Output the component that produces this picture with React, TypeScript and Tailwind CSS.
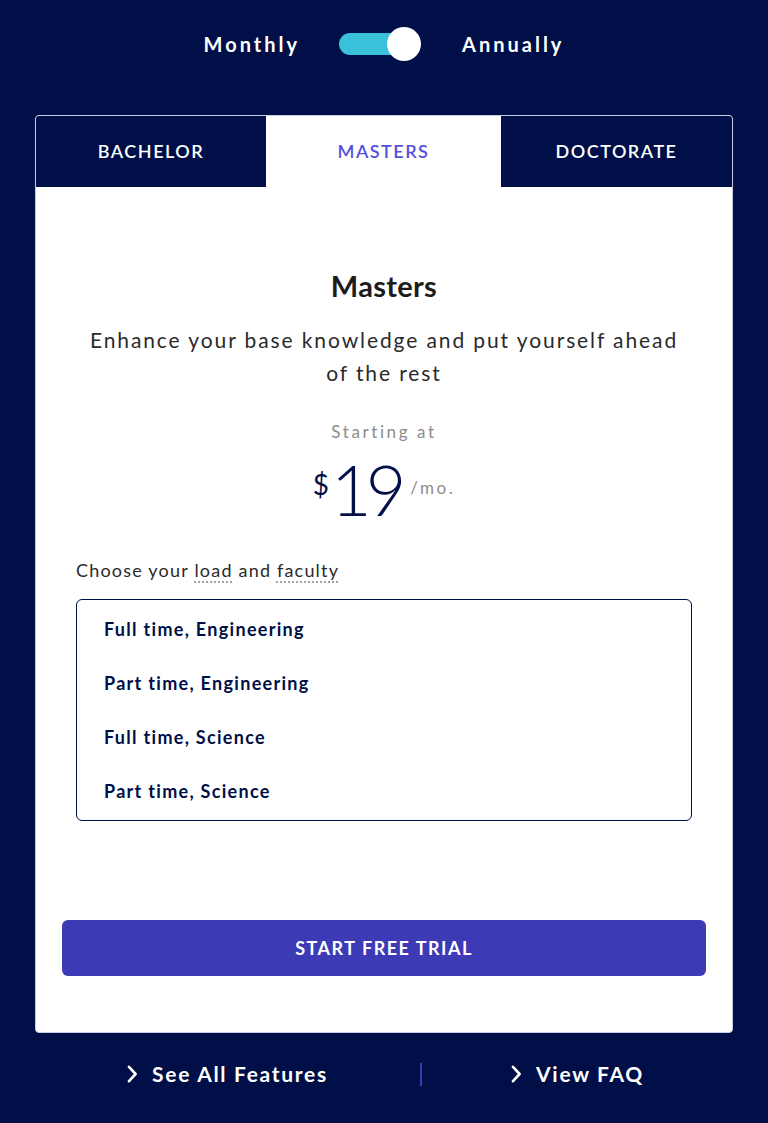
import { useState } from 'react'

const options = [
  'Full time, Engineering',
  'Part time, Engineering',
  'Full time, Science',
  'Part time, Science',
]

function Chevron() {
  return (
    <svg width="11" height="18" viewBox="0 0 11 18" fill="none" className="shrink-0">
      <path d="M2 1.8 L8.6 9 L2 16.2" stroke="white" strokeWidth="2.6" strokeLinecap="round" strokeLinejoin="round" />
    </svg>
  )
}

export default function App() {
  const [annual, setAnnual] = useState(true)
  const [tab, setTab] = useState('MASTERS')

  return (
    <div className="min-h-screen bg-[#000f47] font-['Lato','Liberation_Sans',sans-serif] flex flex-col items-center pt-[27px]">
      {/* Billing toggle */}
      <div className="flex items-center h-[34px]">
        <span className="text-white text-[20px] font-bold tracking-[3px] mr-[39px]">Monthly</span>
        <button
          onClick={() => setAnnual(!annual)}
          className="relative w-[82px] h-[34px] flex items-center"
        >
          <span className="absolute left-0 w-[66px] h-[22px] rounded-full bg-[#38c1d9]" />
          <span className="absolute right-0 w-[34px] h-[34px] rounded-full bg-white" />
        </button>
        <span className="text-white text-[20px] font-bold tracking-[3px] ml-[41px]">Annually</span>
      </div>

      {/* Card */}
      <div className="mt-[54px] w-[698px] bg-white rounded-[4px] border border-[#c8cbe0] overflow-hidden flex flex-col">
        <div className="flex h-[71px]">
          {['BACHELOR', 'MASTERS', 'DOCTORATE'].map((t, i) => (
            <button
              key={t}
              onClick={() => setTab(t)}
              className={`flex items-center justify-center text-[18px] font-semibold tracking-[1.5px] ${
                i === 0 ? 'w-[230px]' : i === 1 ? 'w-[235px]' : 'flex-1'
              } ${tab === t ? 'bg-white text-[#5450df]' : 'bg-[#000f47] text-white'}`}
            >
              {t}
            </button>
          ))}
        </div>

        <div className="flex flex-col px-[26px] pt-[83px] pb-[56px]">
          <h2 className="text-center text-[29px] leading-[32px] font-bold text-[#1c1c1c] tracking-[0.3px]">Masters</h2>
          <p className="mt-[21px] text-center text-[21px] leading-[33px] tracking-[1.9px] text-[#2a2a2a] px-[18px]">
            Enhance your base knowledge and put yourself ahead of the rest
          </p>
          <p className="mt-[31px] text-center text-[17px] leading-[24px] tracking-[2.6px] text-[#8c8c8c]">Starting at</p>

          <div className="mt-[12px] flex justify-center items-start h-[66px]">
            <span className="text-[28px] leading-none text-[#000f47] mt-[14px] mr-[2px]">$</span>
            <span className="text-[70px] leading-[66px] font-light text-[#000f47] tracking-[-6px]">19</span>
            <span className="text-[17px] text-[#8c8c8c] tracking-[2.5px] mt-[19px] ml-[10px]">/mo.</span>
          </div>

          <p className="mt-[36px] mx-[14px] text-[18px] leading-[24px] tracking-[1.2px] text-[#2a2a2a]">
            Choose your{' '}
            <span className="underline decoration-dotted decoration-[#999] underline-offset-[5px]">load</span> and{' '}
            <span className="underline decoration-dotted decoration-[#999] underline-offset-[5px]">faculty</span>
          </p>

          <div className="mt-[17px] mx-[14px] border border-[#000f47] rounded-[6px] py-[2px]">
            {options.map((o) => (
              <div key={o} className="h-[54px] flex items-center px-[27px] text-[18px] font-bold text-[#000f47] tracking-[1.3px]">
                {o}
              </div>
            ))}
          </div>

          <button className="mt-[99px] h-[56px] rounded-[6px] bg-[#3c3bb5] text-white text-[18px] font-bold tracking-[1.5px]">
            START FREE TRIAL
          </button>
        </div>
      </div>

      {/* Footer links */}
      <div className="mt-[29px] w-[698px] flex items-center h-[24px]">
        <a className="w-[385px] flex items-center justify-center gap-[14px] text-white text-[21px] font-bold tracking-[1.7px]">
          <Chevron />
          See All Features
        </a>
        <span className="w-[2px] h-[23px] bg-[#3c3bb5]" />
        <a className="flex-1 flex items-center justify-center gap-[14px] text-white text-[21px] font-bold tracking-[1.7px]">
          <Chevron />
          View FAQ
        </a>
      </div>
    </div>
  )
}
